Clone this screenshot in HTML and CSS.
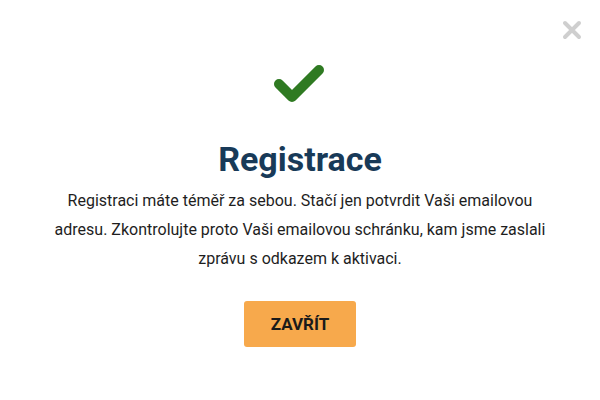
FILE: index.html
```html
<!DOCTYPE html>
<html lang="cs">
<head>
<meta charset="utf-8">
<link rel="stylesheet" href="styles.css">
</head>
<body>
<div class="modal">
  <button class="close" aria-label="Zavřít">
    <svg width="20" height="20" viewBox="0 0 20 20"><path d="M3 3L17 17M17 3L3 17" stroke="#cfcfcf" stroke-width="4" stroke-linecap="round"/></svg>
  </button>
  <div class="check">
    <svg width="56" height="44" viewBox="0 0 56 44"><path d="M7 20L20 33L47 6" fill="none" stroke="#2f7a22" stroke-width="10" stroke-linecap="round" stroke-linejoin="round"/></svg>
  </div>
  <h1 class="title">Registrace</h1>
  <p class="text">Registraci máte téměř za sebou. Stačí jen potvrdit Vaši emailovou adresu. Zkontrolujte proto Vaši emailovou schránku, kam jsme zaslali zprávu s odkazem k aktivaci.</p>
  <button class="btn">ZAVŘÍT</button>
</div>
</body>
</html>
```
FILE: styles.css
```css
html, body { margin: 0; padding: 0; background: #fff; }
body { font-family: Roboto, "Noto Sans", sans-serif; width: 600px; height: 400px; overflow: hidden; }
.modal { position: relative; display: flex; flex-direction: column; align-items: center; padding-top: 64px; }
.close { position: absolute; top: 20px; right: 18px; background: none; border: 0; padding: 0; width: 20px; height: 20px; cursor: pointer; }
.check { height: 44px; }
.title { margin: 31px 0 0; font-size: 34px; font-weight: 700; color: #183a58; line-height: 40px; }
.text { margin: 7px 0 0; width: 500px; text-align: center; font-size: 16px; line-height: 29px; color: #1e1e1e; }
.btn { margin-top: 28px; width: 112px; height: 46px; background: #f7a94c; border: 0; border-radius: 3px; font-family: Roboto, sans-serif; font-weight: 700; font-size: 17px; color: #1a1a1a; cursor: pointer; }
```
